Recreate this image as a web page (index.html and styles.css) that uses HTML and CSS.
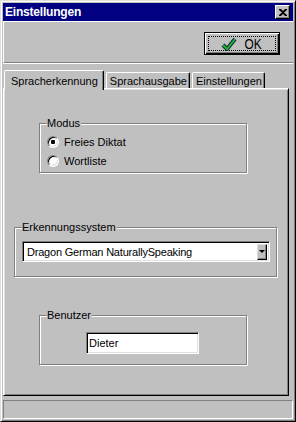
FILE: index.html
```html
<!DOCTYPE html>
<html lang="de">
<head>
  <meta charset="UTF-8">
  <title>Einstellungen</title>
<link rel="stylesheet" href="styles.css">
</head>
<body>
<div class="window">
  <div class="titlebar">
    <span class="title">Einstellungen</span>
    <button class="close" aria-label="Schließen">
      <svg width="8" height="7" viewBox="0 0 8 7"><path d="M0 0h2l2 2 2-2h2v1l-3 2.5 3 2.5v1h-2l-2-2-2 2h-2v-1l3-2.5-3-2.5z" fill="#000"/></svg>
    </button>
  </div>

  <div class="toolbar">
    <button class="btn default">
      <span class="focus">
        <svg class="check" width="16" height="14" viewBox="0 0 16 14">
          <polyline points="2,8 6,12 14,2" fill="none" stroke="#0a2a4a" stroke-width="4" stroke-linejoin="miter"/>
          <polyline points="2,8 6,12 14,2" fill="none" stroke="#22b522" stroke-width="2"/>
        </svg>
        <span class="btn-text">OK</span>
      </span>
    </button>
  </div>

  <ul class="tabs">
    <li class="tab active">Spracherkennung</li>
    <li class="tab">Sprachausgabe</li>
    <li class="tab">Einstellungen</li>
  </ul>

  <div class="panel">
    <div class="group modus">
      <span class="group-label">Modus</span>
      <label class="radio-row"><input type="radio" name="modus" checked> Freies Diktat</label>
      <label class="radio-row"><input type="radio" name="modus"> Wortliste</label>
    </div>

    <div class="group engine">
      <span class="group-label">Erkennungssystem</span>
      <div class="combo">
        <span class="combo-text">Dragon German NaturallySpeaking</span>
        <span class="combo-btn"><span class="arrow"></span></span>
      </div>
    </div>

    <div class="group user">
      <span class="group-label">Benutzer</span>
      <input class="field" type="text" value="Dieter">
    </div>
  </div>

  <div class="status"></div>
</div>
</body>
</html>
```

FILE: styles.css
```css
* {
  box-sizing: border-box;
  margin: 0;
}

body {
  margin: 0;
  background: #c0c0c0;
  font-family: "Liberation Sans", Arial, sans-serif;
  font-size: 11px;
  color: #000;
}

.window {
  width: 296px;
  height: 422px;
  padding: 2px;
  background: #c0c0c0;
  border: 1px solid;
  border-color: #dfdfdf #000 #000 #dfdfdf;
  box-shadow: inset 1px 1px 0 #fff, inset -1px -1px 0 #808080;
  display: flex;
  flex-direction: column;
}

/* title bar */

.titlebar {
  height: 18px;
  background: #000080;
  color: #fff;
  display: flex;
  align-items: center;
  justify-content: space-between;
  padding: 0 3px 0 2px;
}

.title {
  font-weight: bold;
  font-size: 12px;
  letter-spacing: -0.2px;
}

.close {
  width: 15px;
  height: 14px;
  padding: 0;
  background: #c0c0c0;
  border: 1px solid;
  border-color: #fff #000 #000 #fff;
  box-shadow: inset -1px -1px 0 #808080;
  display: flex;
  align-items: center;
  justify-content: center;
}

/* toolbar with OK button */

.toolbar {
  height: 42px;
  border-top: 1px solid #fff;
  border-left: 1px solid #fff;
  border-bottom: 1px solid #808080;
  box-shadow: 0 1px 0 #fff;
  display: flex;
  justify-content: flex-end;
  align-items: flex-start;
  padding: 10px 13px 0 0;
}

.btn {
  width: 76px;
  height: 23px;
  padding: 0;
  background: #c0c0c0;
  font: inherit;
  border: 1px solid #000;
  box-shadow: inset 1px 1px 0 #fff, inset -1px -1px 0 #000, inset -2px -2px 0 #808080;
  display: flex;
  align-items: center;
  justify-content: center;
}

.focus {
  width: 68px;
  height: 15px;
  border: 1px dotted #000;
  display: flex;
  align-items: center;
  justify-content: center;
  gap: 6px;
}

.btn-text {
  font-size: 14px;
  transform: scaleX(0.85);
}

/* tabs */

.tabs {
  list-style: none;
  padding: 0 0 0 1px;
  height: 25px;
  display: flex;
  align-items: flex-end;
  gap: 2px;
}

.tab {
  height: 16px;
  padding: 1px 2px 0 3px;
  line-height: 14px;
  border: 1px solid;
  border-bottom: 0;
  border-color: #fff #000 #000 #fff;
  border-radius: 2px 2px 0 0;
  box-shadow: inset -1px 0 0 #808080;
}

.tab.active {
  height: 20px;
  margin-bottom: -2px;
  padding: 3px 5px 0 6px;
  background: #c0c0c0;
  position: relative;
  z-index: 1;
}

/* tab panel */

.panel {
  flex: 1;
  margin-right: 4px;
  border: 1px solid;
  border-color: #fff #000 #000 #fff;
  box-shadow: inset 1px 1px 0 #dfdfdf, inset -1px -1px 0 #808080;
  padding-top: 34px;
}

.group {
  border: 1px solid #808080;
  box-shadow: inset 1px 1px 0 #fff, 1px 1px 0 #fff;
  height: 50px;
}

.group-label {
  display: table;
  margin: -7px 0 0 7px;
  padding: 0 1px 0 0;
  line-height: 13px;
  background: #c0c0c0;
}

.modus {
  margin-left: 35px;
  width: 208px;
}

.radio-row {
  display: flex;
  align-items: center;
  gap: 5px;
  height: 19px;
  padding-left: 7px;
}

.radio-row:first-of-type {
  margin-top: 2px;
}

.radio-row input {
  appearance: none;
  width: 12px;
  height: 12px;
  margin: 0;
  border-radius: 50%;
  border: 1px solid;
  border-color: #808080 #fff #fff #808080;
  box-shadow: inset 1px 1px 0 #000, inset -1px -1px 0 #dfdfdf;
  background: #fff;
}

.radio-row input:checked {
  background: radial-gradient(circle, #000 2px, #fff 2.5px);
}

.engine {
  margin: 54px 0 0 10px;
  width: 263px;
}

.combo {
  margin: 7px 0 0 7px;
  width: 248px;
  height: 21px;
  background: #fff;
  border: 1px solid;
  border-color: #808080 #fff #fff #808080;
  box-shadow: inset 1px 1px 0 #000, inset -1px -1px 0 #dfdfdf;
  display: flex;
  align-items: center;
  justify-content: space-between;
  padding: 0 2px 0 4px;
}

.combo-text {
  letter-spacing: -0.2px;
}

.combo-btn {
  width: 10px;
  height: 16px;
  background: #c0c0c0;
  border: 1px solid;
  border-color: #dfdfdf #000 #000 #dfdfdf;
  box-shadow: inset -1px -1px 0 #808080;
  display: flex;
  align-items: center;
  justify-content: center;
}

.arrow {
  border: 3px solid transparent;
  border-top: 3px solid #000;
  border-bottom: 0;
}

.user {
  margin: 38px 0 0 35px;
  width: 208px;
}

.field {
  display: block;
  margin: 10px 0 0 46px;
  width: 113px;
  height: 22px;
  padding: 0 2px;
  border: 1px solid;
  border-color: #808080 #fff #fff #808080;
  box-shadow: inset 1px 1px 0 #000, inset -1px -1px 0 #dfdfdf;
  font: inherit;
}

.status {
  height: 19px;
  margin-top: 4px;
  border: 1px solid;
  border-color: #808080 #fff #fff #808080;
}
```
